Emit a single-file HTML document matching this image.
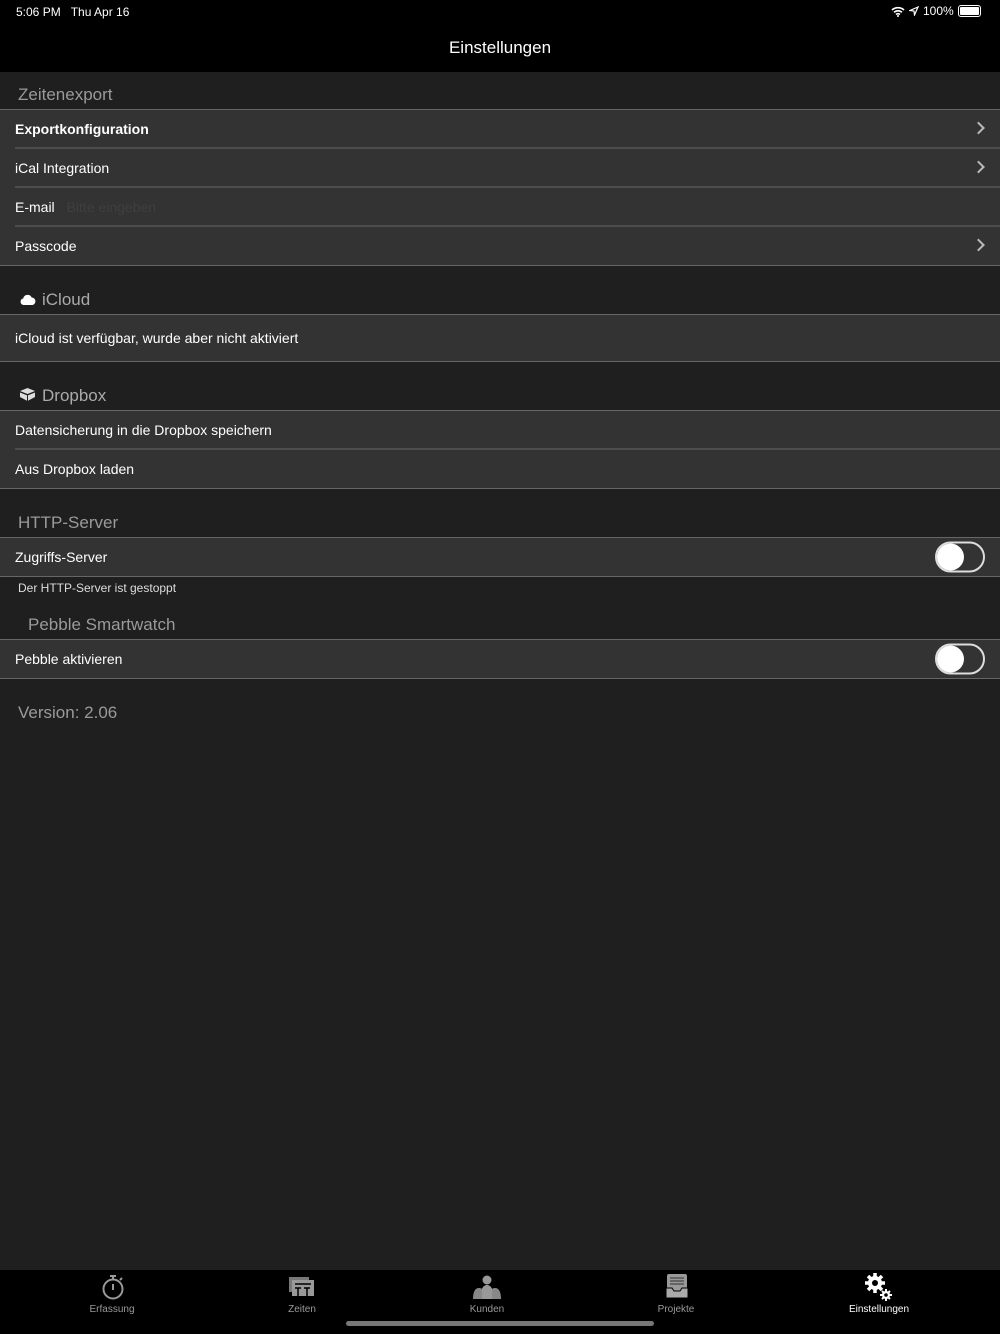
<!DOCTYPE html>
<html><head><meta charset="utf-8"><style>
*{margin:0;padding:0;box-sizing:border-box}
body{width:1000px;height:1334px;background:#1f1f1f;font-family:"Liberation Sans",sans-serif;color:#fff;position:relative;overflow:hidden}
.abs{position:absolute}
.status{top:0;left:0;width:1000px;height:72px;background:#000}
.cell{position:absolute;left:0;width:1000px;background:#333;border-top:1px solid #666;border-bottom:1px solid #666;font-size:14px;padding-left:15px;display:flex;align-items:center}
.sep{position:absolute;left:15px;right:0;height:2px;background:#4d4d4d}
.hdr{position:absolute;left:18px;font-size:17px;color:#9a9a9a}
.chev{position:absolute;right:17px;top:50%;width:9px;height:9px;border-right:2px solid #bbb;border-top:2px solid #bbb;transform:translateY(-50%) rotate(45deg)}
.tog{position:absolute;right:15px;top:50%;transform:translateY(-50%);width:50px;height:31px;border:2px solid #ddd;border-radius:16px}
.tog::after{content:"";position:absolute;left:0;top:0;width:27px;height:27px;border-radius:50%;background:#fff}
.tab{position:absolute;top:1270px;height:64px;width:1000px;background:#000}
.tl{position:absolute;top:1304px;font-size:10px;color:#999;transform:translateX(-50%)}
</style></head><body>
<div class="abs status"></div>
<div class="abs" style="left:16px;top:5px;font-size:12px">5:06 PM&nbsp;&nbsp;&nbsp;Thu Apr 16</div>
<div class="abs" style="left:891px;top:4px;font-size:12px;display:flex;align-items:center;gap:4px">
<svg width="14" height="11" viewBox="0 0 14 11"><path d="M1 4a9 9 0 0 1 12 0M3 6.3a6 6 0 0 1 8 0M5 8.5a3 3 0 0 1 4 0" stroke="#fff" stroke-width="1.6" fill="none"/><circle cx="7" cy="10" r="1" fill="#fff"/></svg>
<svg width="10" height="10" viewBox="0 0 10 10"><path d="M9 1L1 4.5 5 5 5.5 9z" stroke="#fff" fill="none" stroke-width="1.2"/></svg>
<span>100%</span>
<span style="display:inline-block;width:23px;height:12px;border:1px solid #fff;border-radius:3px;padding:1px"><span style="display:block;width:100%;height:100%;background:#fff;border-radius:1px"></span></span>
</div>
<div class="abs" style="top:38px;width:1000px;text-align:center;font-size:17px">Einstellungen</div>

<div class="hdr" style="top:85px">Zeitenexport</div>
<div class="cell" style="top:109px;height:157px;display:block;padding:0"></div>
<div class="abs" style="left:15px;top:121px;font-size:14px;font-weight:bold">Exportkonfiguration</div>
<div class="abs" style="left:15px;top:160px;font-size:14px">iCal Integration</div>
<div class="abs" style="left:15px;top:199px;font-size:14px">E-mail <span style="color:#3f3f3f;margin-left:8px">Bitte eingeben</span></div>
<div class="abs" style="left:15px;top:238px;font-size:14px">Passcode</div>
<div class="sep" style="top:147px"></div><div class="sep" style="top:186px"></div><div class="sep" style="top:225px"></div>
<div class="abs" style="right:0;top:109px;width:30px;height:38px"><div class="chev"></div></div>
<div class="abs" style="right:0;top:148px;width:30px;height:38px"><div class="chev"></div></div>
<div class="abs" style="right:0;top:226px;width:30px;height:38px"><div class="chev"></div></div>

<div class="hdr" style="top:290px;left:20px;color:#aaa"><svg width="16" height="11" viewBox="0 0 16 11" style="margin-right:6px"><path d="M3.5 11a3.3 3.3 0 0 1-.3-6.5 4.5 4.5 0 0 1 8.5-1 3.8 3.8 0 0 1 .8 7.5z" fill="#fff"/></svg>iCloud</div>
<div class="cell" style="top:314px;height:48px">iCloud ist verfügbar, wurde aber nicht aktiviert</div>

<div class="hdr" style="top:386px;left:20px;color:#aaa"><svg width="15" height="13" viewBox="0 0 15 13" style="margin-right:7px"><path d="M7.5 0L15 3 7.5 6 0 3zM0 4.5L7.5 7.5 15 4.5 15 9 7.5 13 0 9z" fill="#ddd"/><path d="M7.5 7.5V13" stroke="#1f1f1f" stroke-width="1"/></svg>Dropbox</div>
<div class="cell" style="top:410px;height:79px;display:block;padding:0"></div>
<div class="abs" style="left:15px;top:422px;font-size:14px">Datensicherung in die Dropbox speichern</div>
<div class="abs" style="left:15px;top:461px;font-size:14px">Aus Dropbox laden</div>
<div class="sep" style="top:448px"></div>

<div class="hdr" style="top:513px">HTTP-Server</div>
<div class="cell" style="top:537px;height:40px">Zugriffs-Server<div class="tog"></div></div>
<div class="abs" style="left:18px;top:581px;font-size:12px;color:#ddd">Der HTTP-Server ist gestoppt</div>

<div class="hdr" style="top:615px;left:28px">Pebble Smartwatch</div>
<div class="cell" style="top:639px;height:40px">Pebble aktivieren<div class="tog"></div></div>

<div class="hdr" style="top:703px">Version: 2.06</div>

<div class="tab"></div>
<svg class="abs" style="left:101px;top:1274px" width="24" height="26" viewBox="0 0 24 26"><circle cx="12" cy="15" r="9.5" stroke="#999" stroke-width="2" fill="none"/><path d="M9 2h6M12 2v3M19 6l2-2M12 10v6" stroke="#999" stroke-width="2"/></svg>
<svg class="abs" style="left:289px;top:1277px" width="26" height="20" viewBox="0 0 26 20"><rect x="0" y="0" width="20" height="15" fill="#777"/><rect x="3" y="3" width="22" height="16" fill="#999"/><path d="M6 7h16M6 11h6M15 11h6M9 11v8M18 11v8" stroke="#000" stroke-width="1.5"/></svg>
<svg class="abs" style="left:472px;top:1275px" width="30" height="24" viewBox="0 0 30 24"><circle cx="15" cy="5" r="4.5" fill="#999"/><path d="M8 24c0-9 3-14 7-14s7 5 7 14z" fill="#999"/><path d="M1 24c0-7 2-11 6-11 2 0 3 1 3 1v10zM29 24c0-7-2-11-6-11-2 0-3 1-3 1v10z" fill="#888"/></svg>
<svg class="abs" style="left:665px;top:1274px" width="24" height="26" viewBox="0 0 24 26"><rect x="2" y="0" width="20" height="24" rx="2" fill="#999"/><path d="M5 4h14M5 7h14M5 10h14" stroke="#444" stroke-width="1.2"/><path d="M1 14h6l2 3h6l2-3h6v10H1z" fill="#aaa" stroke="#000" stroke-width="1"/></svg>
<svg class="abs" style="left:865px;top:1272px" width="28" height="30" viewBox="0 0 28 30"><g fill="#fff"><circle cx="10" cy="11" r="7"/><g stroke="#fff" stroke-width="3.5"><path d="M10 1v20M0 11h20M3 4l14 14M17 4L3 18"/></g><circle cx="21" cy="23" r="4"/><g stroke="#fff" stroke-width="2"><path d="M21 17v12M15 23h12M17 19l8 8M25 19l-8 8"/></g></g><circle cx="10" cy="11" r="3" fill="#000"/><circle cx="21" cy="23" r="1.8" fill="#000"/></svg>
<div class="tl" style="left:112px">Erfassung</div>
<div class="tl" style="left:302px">Zeiten</div>
<div class="tl" style="left:487px">Kunden</div>
<div class="tl" style="left:676px">Projekte</div>
<div class="tl" style="left:879px;color:#fff">Einstellungen</div>
<div class="abs" style="left:346px;top:1321px;width:308px;height:5px;border-radius:3px;background:#777"></div>
</body></html>
